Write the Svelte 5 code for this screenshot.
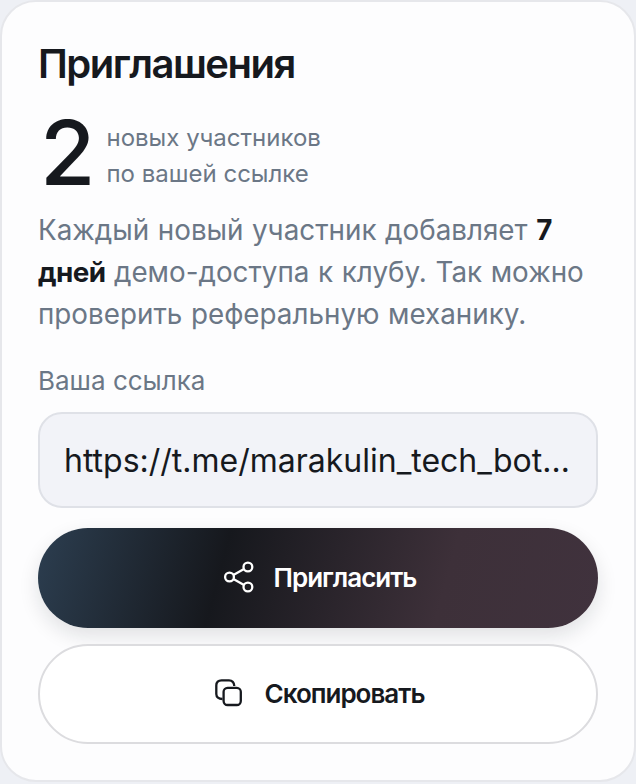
<script lang="ts">
const inviteUrl = 'https://t.me/marakulin_tech_bot?start=ref_2841';
</script>

<div class="page">
  <section class="card">
    <h2 class="title">Приглашения</h2>

    <div class="stat">
      <span class="stat-value">2</span>
      <span class="stat-label">новых участников<br />по вашей ссылке</span>
    </div>

    <p class="desc">
      Каждый новый участник добавляет <b>7 дней</b> демо-доступа к клубу. Так можно проверить реферальную механику.
    </p>

    <div class="field-label">Ваша ссылка</div>
    <div class="link-box"><span class="link-text">{inviteUrl}</span></div>

    <button class="btn primary" type="button">
      <svg width="32" height="32" viewBox="0 0 32 32" fill="none" stroke="currentColor" stroke-width="2.3" aria-hidden="true">
        <circle cx="24.9" cy="6" r="4.4" />
        <circle cx="6.5" cy="16" r="4.4" />
        <circle cx="24.9" cy="26" r="4.4" />
        <path d="M10.4 14 21 8.1M10.4 18 21 23.9" />
      </svg>
      Пригласить
    </button>

    <button class="btn secondary" type="button">
      <svg width="28" height="28" viewBox="0 0 28 28" fill="none" stroke="currentColor" stroke-width="2.3" aria-hidden="true">
        <path d="M7.5 20C3.5 20 1.3 18 1.3 15V6.5C1.3 3 3.3 1.3 6.5 1.3H14C17 1.3 19 3 19.3 7" />
        <rect x="8.6" y="8.8" width="17.2" height="17.2" rx="4" />
      </svg>
      Скопировать
    </button>
  </section>
</div>

<style>
  :global(body) {
    margin: 0;
    background: #eef0f5;
  }

  .page {
    height: 784px;
    box-sizing: border-box;
    font-family: Inter, "Noto Sans", sans-serif;
  }

  .card {
    box-sizing: border-box;
    height: 782px;
    padding: 40px 36px 0 36px;
    background: #fdfdfe;
    border: 2px solid #e6e7eb;
    border-radius: 36px;
  }

  .title {
    margin: 0;
    font-size: 40px;
    line-height: 44px;
    font-weight: 600;
    letter-spacing: -1.5px;
    color: #16191e;
  }

  .stat {
    display: flex;
    align-items: center;
    gap: 12px;
    margin-top: 34px;
    padding-left: 2px;
  }

  .stat-value {
    margin-top: -6px;
    font-size: 90px;
    line-height: 72px;
    font-weight: 500;
    letter-spacing: -1px;
    color: #16191e;
  }

  .stat-label {
    font-size: 24px;
    line-height: 36px;
    color: #6b7786;
  }

  .desc {
    margin: 17px 0 0;
    font-size: 27.8px;
    line-height: 42px;
    word-spacing: 0.8px;
    color: #6b7786;
  }

  .desc b {
    font-weight: 700;
    letter-spacing: -0.6px;
    color: #16191e;
  }

  .field-label {
    margin-top: 28px;
    font-size: 26px;
    line-height: 36px;
    color: #6b7786;
  }

  .link-box {
    box-sizing: border-box;
    height: 96px;
    margin-top: 13px;
    padding: 0 24px;
    display: flex;
    align-items: center;
    background: #f2f3f8;
    border: 2px solid #dfe1e7;
    border-radius: 24px;
  }

  .link-text {
    overflow: hidden;
    text-overflow: ellipsis;
    white-space: nowrap;
    font-size: 32px;
    color: #16191e;
  }

  .btn {
    box-sizing: border-box;
    width: 100%;
    height: 100px;
    padding: 0 0 2px 3px;
    display: flex;
    align-items: center;
    justify-content: center;
    border-radius: 50px;
    font-family: inherit;
    font-size: 26px;
    font-weight: 600;
    letter-spacing: -1px;
    cursor: pointer;
  }

  .primary {
    gap: 19px;
    margin-top: 20px;
    border: none;
    color: #fff;
    background: linear-gradient(105deg, #2c3e50 0%, #16181d 33%, #3d3039 72%, #40323d 100%);
    box-shadow: 0 8px 20px rgba(20, 24, 30, 0.12);
  }

  .secondary {
    gap: 22px;
    margin-top: 16px;
    background: #fff;
    border: 2px solid #dcdcdf;
    color: #16191e;
  }
</style>
